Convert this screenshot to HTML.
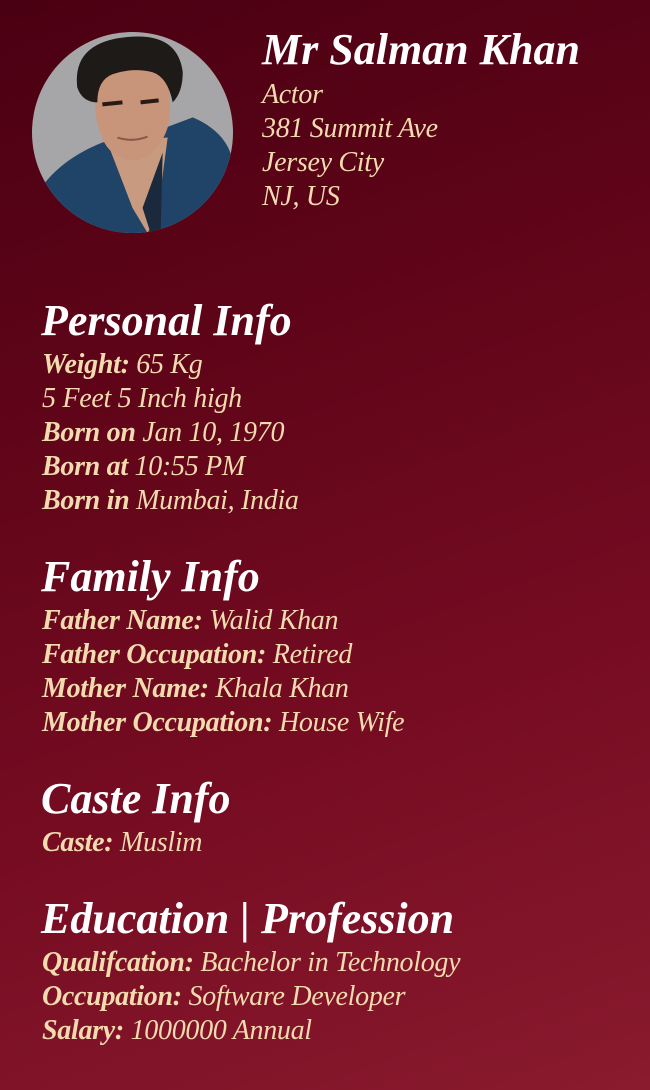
<!DOCTYPE html>
<html><head><meta charset="utf-8"><style>
html,body{margin:0;padding:0}
body{width:650px;height:1090px;overflow:hidden;position:relative;
background:linear-gradient(160deg,#4a0012 0%,#5e0418 30%,#760c22 65%,#8a1a2e 100%);
font-family:"Liberation Serif",serif;font-style:italic;color:#f3dbb0}
.h{position:absolute;left:41px;color:#fff;font-weight:bold;font-size:44px;line-height:46px;white-space:nowrap}
.l{position:absolute;left:42px;font-size:28px;line-height:34px;white-space:nowrap;letter-spacing:-0.3px}
b{font-weight:bold}
</style></head><body>
<svg style="position:absolute;left:32px;top:32px" width="201" height="201" viewBox="0 0 200 200">
<defs><clipPath id="c"><ellipse cx="100" cy="100" rx="100" ry="100"/></clipPath></defs>
<g clip-path="url(#c)">
<rect width="200" height="200" fill="#a6a6a8"/>
<path d="M0 170 Q20 130 70 110 L120 100 L160 85 Q195 100 200 130 L200 200 L0 200Z" fill="#1f4468"/>
<path d="M75 110 L100 175 L115 200 L125 180 L135 105Z" fill="#c89a80"/>
<path d="M110 175 L118 200 L128 200 L130 120Z" fill="#1a2a3c"/>
<path d="M62 60 Q60 40 80 38 Q125 30 135 50 Q140 80 135 95 Q125 125 100 128 Q75 125 68 100 Q62 85 62 60Z" fill="#c9957a"/>
<path d="M45 55 Q40 10 95 5 Q145 0 150 40 Q150 60 140 70 Q135 45 120 40 Q100 35 80 42 Q65 48 65 70 Q50 70 45 55Z" fill="#1e1a18"/>
<path d="M70 72 L90 70 M108 70 L126 68" stroke="#2a1a14" stroke-width="4"/>
<path d="M85 105 Q100 110 115 104" stroke="#8a5a48" stroke-width="2" fill="none"/>
</g></svg>
<div style="position:absolute;left:262px;top:27px;color:#fff;font-weight:bold;font-size:44px;line-height:46px;white-space:nowrap">Mr Salman Khan</div>
<div class="l" style="left:262px;top:78px">Actor</div>
<div class="l" style="left:262px;top:112px">381 Summit Ave</div>
<div class="l" style="left:262px;top:146px">Jersey City</div>
<div class="l" style="left:262px;top:180px">NJ, US</div>

<div class="h" style="top:298px">Personal Info</div>
<div class="l" style="top:348px"><b>Weight:</b> 65 Kg</div>
<div class="l" style="top:382px">5 Feet 5 Inch high</div>
<div class="l" style="top:416px"><b>Born on</b> Jan 10, 1970</div>
<div class="l" style="top:450px"><b>Born at</b> 10:55 PM</div>
<div class="l" style="top:484px"><b>Born in</b> Mumbai, India</div>

<div class="h" style="top:554px">Family Info</div>
<div class="l" style="top:604px"><b>Father Name:</b> Walid Khan</div>
<div class="l" style="top:638px"><b>Father Occupation:</b> Retired</div>
<div class="l" style="top:672px"><b>Mother Name:</b> Khala Khan</div>
<div class="l" style="top:706px"><b>Mother Occupation:</b> House Wife</div>

<div class="h" style="top:776px">Caste Info</div>
<div class="l" style="top:826px"><b>Caste:</b> Muslim</div>

<div class="h" style="top:896px">Education | Profession</div>
<div class="l" style="top:946px"><b>Qualifcation:</b> Bachelor in Technology</div>
<div class="l" style="top:980px"><b>Occupation:</b> Software Developer</div>
<div class="l" style="top:1014px"><b>Salary:</b> 1000000 Annual</div>
</body></html>
